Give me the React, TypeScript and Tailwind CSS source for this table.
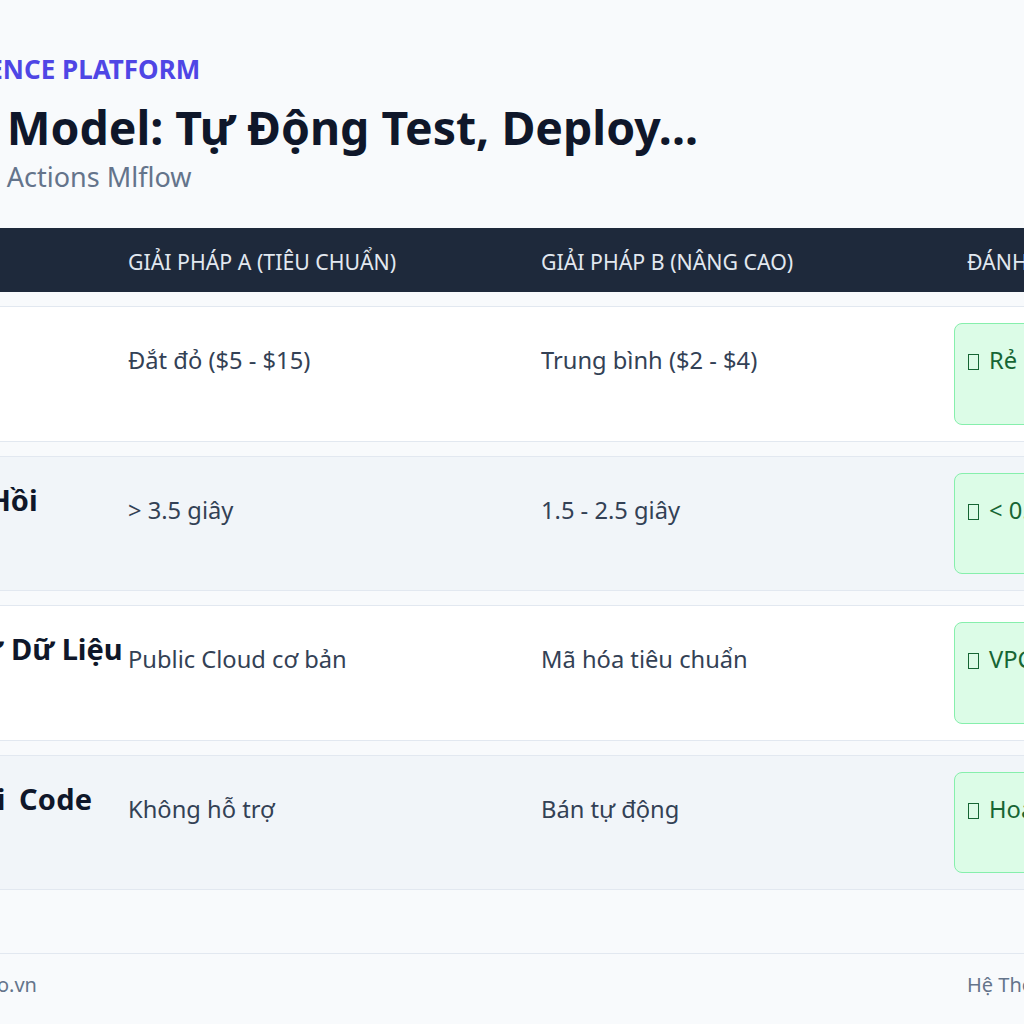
import type { ReactNode } from "react"

type Row = {
  pre: string
  track: string
  label: ReactNode
  a: string
  b: string
  c: string
  bg: string
}

const rows: Row[] = [
  {
    pre: "",
    track: "",
    label: "Chi Phí Vận Hành",
    a: "Đắt đỏ ($5 - $15)",
    b: "Trung bình ($2 - $4)",
    c: "Rẻ nhất ($0.5 - $1)",
    bg: "bg-white",
  },
  {
    pre: "Thời Gian Chờ Phản ",
    track: "tracking-[-0.88px]",
    label: "Hồi",
    a: "> 3.5 giây",
    b: "1.5 - 2.5 giây",
    c: "< 0.8 giây",
    bg: "bg-[#f1f5f9]",
  },
  {
    pre: "Bảo Mật & Riêng Tư ",
    track: "tracking-[0.26px]",
    label: "Dữ Liệu",
    a: "Public Cloud cơ bản",
    b: "Mã hóa tiêu chuẩn",
    c: "VPC riêng biệt",
    bg: "bg-white",
  },
  {
    pre: "Tự Động Kiểm Tra Lỗ",
    track: "tracking-[-0.79px]",
    label: (
      <>
        i<span className="[word-spacing:6px]"> </span>
        <span className="tracking-[0.2px]">Code</span>
      </>
    ),
    a: "Không hỗ trợ",
    b: "Bán tự động",
    c: "Hoàn toàn tự động",
    bg: "bg-[#f1f5f9]",
  },
]

// missing-glyph box, as the emoji shows in the reference
function Tofu() {
  return <span className="inline-block w-[11px] h-[16px] border-[1.5px] border-current align-[-1px] mr-[10px]" />
}

export default function App() {
  return (
    <div className="min-h-screen bg-[#f8fafc] overflow-hidden font-['Noto_Sans',sans-serif]">
      <div className="flex justify-center">
        <div className="w-[1594px] shrink-0 pt-[53px]">
          <p className="text-[26px] leading-[32px] font-bold uppercase text-[#4f46e5] whitespace-nowrap">
            Enterprise AI Inference Platform
          </p>
          <h1 className="mt-[14px] text-[46.4px] leading-[56px] font-bold text-[#0f172a] whitespace-nowrap">
            <span className="tracking-[-0.66px]">CI/CD cho AI </span>Model: Tự Động Test, Deploy...
          </h1>
          <p className="mt-[6px] text-[27px] leading-[32px] text-[#64748b] whitespace-nowrap">
            <span className="tracking-[0.95px]">Cicd Ai Model Github </span>Actions Mlflow
          </p>

          <div className="mt-[35px]">
            <div className="grid grid-cols-[413px_413px_413px_355px] h-[64px] pt-[4px] items-center bg-[#1e293b] text-[21.3px] uppercase text-[#e2e8f0] whitespace-nowrap">
              <div>Tiêu chí</div>
              <div>Giải pháp A (Tiêu chuẩn)</div>
              <div>Giải pháp B (Nâng cao)</div>
              <div className="pl-[13px]">Đánh giá</div>
            </div>

            <div className="mt-[14px] flex flex-col gap-[14px]">
              {rows.map((r) => (
                <div
                  key={r.a}
                  className={`grid grid-cols-[413px_413px_413px_355px] items-start border-y border-[#e2e8f0] py-[16px] ${r.bg}`}
                >
                  <div className="pt-[9px] text-[29px] leading-[36px] font-bold text-[#0f172a] whitespace-nowrap">
                    <span className={r.track}>{r.pre}</span>
                    {r.label}
                  </div>
                  <div className="pt-[22px] text-[23.7px] leading-[30px] text-[#334155]">{r.a}</div>
                  <div className="pt-[22px] text-[23.7px] leading-[30px] text-[#334155]">{r.b}</div>
                  <div className="h-[101.5px] rounded-lg border border-[#86efac] bg-[#dcfce7] pl-[13px] pt-[21px] text-[23.7px] leading-[30px] text-[#166534] whitespace-nowrap">
                    <Tofu />
                    {r.c}
                  </div>
                </div>
              ))}
            </div>
          </div>

          <div className="mt-[63px] flex justify-between border-t border-[#e2e8f0] pt-[17px] text-[20px] leading-[28px] text-[#64748b] whitespace-nowrap">
            <span>© 2025 AI Solutions – aitechpro.vn</span>
            <span className="w-[342px]">Hệ Thống Tư Vấn Giải Pháp AI</span>
          </div>
        </div>
      </div>
    </div>
  )
}
